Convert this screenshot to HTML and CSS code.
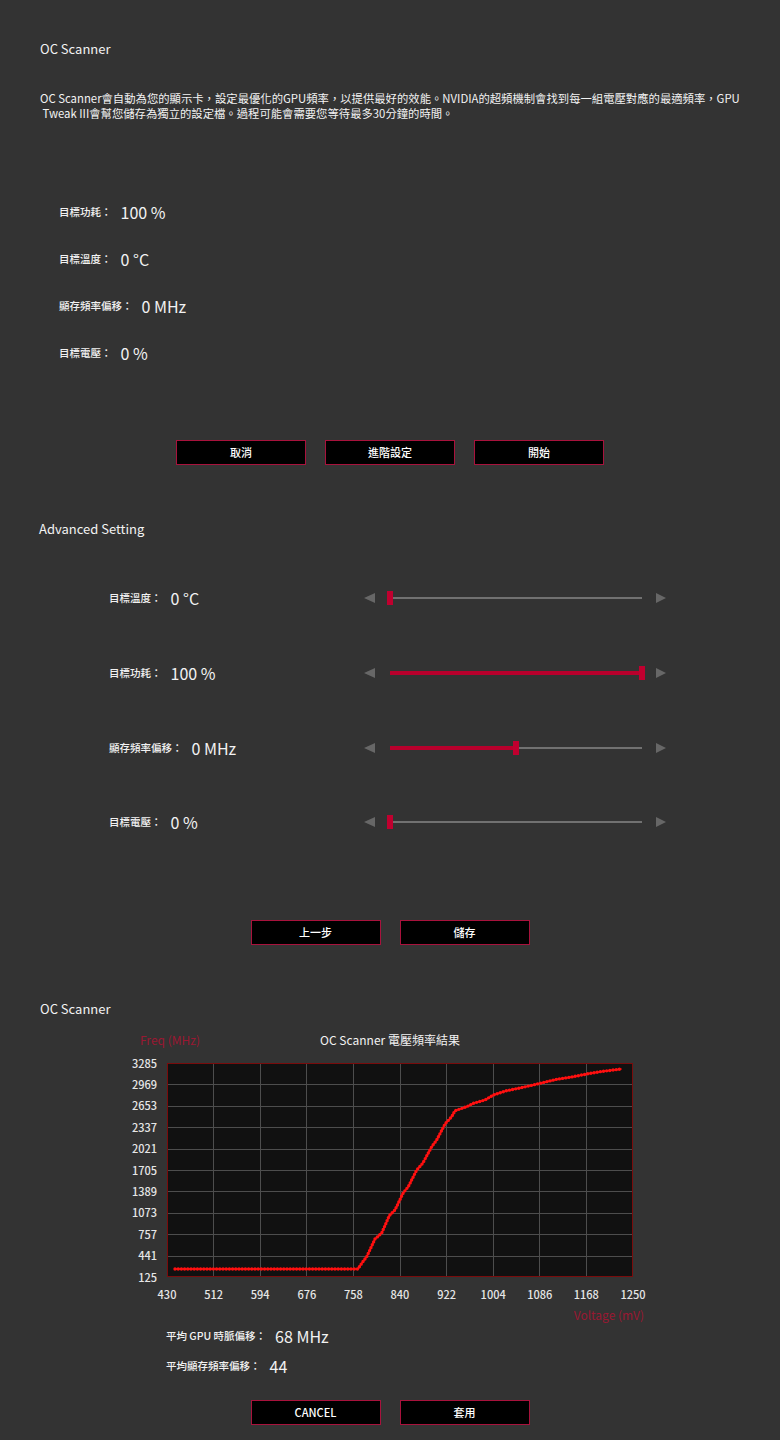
FILE: index.html
```html
<!DOCTYPE html>
<html lang="zh-Hant">
<head>
<meta charset="utf-8">
<title>OC Scanner</title>
<link rel="stylesheet" href="styles.css">
</head>
<body>
<main class="page">
  <section class="block">
    <h1 class="title">OC Scanner</h1>
    <p class="desc">OC Scanner會自動為您的顯示卡，設定最優化的GPU頻率，以提供最好的效能。NVIDIA的超頻機制會找到每一組電壓對應的最適頻率，GPU<br>&nbsp;Tweak III會幫您儲存為獨立的設定檔。過程可能會需要您等待最多30分鐘的時間。</p>
    <ul class="stats">
      <li class="stat"><span class="label">目標功耗：</span><span class="value">100 %</span></li>
      <li class="stat"><span class="label">目標溫度：</span><span class="value">0 °C</span></li>
      <li class="stat"><span class="label">顯存頻率偏移：</span><span class="value">0 MHz</span></li>
      <li class="stat"><span class="label">目標電壓：</span><span class="value">0 %</span></li>
    </ul>
    <div class="actions actions-first">
      <button class="btn">取消</button>
      <button class="btn">進階設定</button>
      <button class="btn">開始</button>
    </div>
  </section>

  <section class="block">
    <h2 class="title title-adv">Advanced Setting</h2>
    <ul class="sliders">
      <li class="slider-row">
        <div class="field"><span class="label">目標溫度：</span><span class="value">0 °C</span></div>
        <div class="slider">
          <span class="arrow arrow-left"></span>
          <div class="track"><div class="fill" style="width:0px"></div><div class="thumb" style="left:0px"></div></div>
          <span class="arrow arrow-right"></span>
        </div>
      </li>
      <li class="slider-row">
        <div class="field"><span class="label">目標功耗：</span><span class="value">100 %</span></div>
        <div class="slider">
          <span class="arrow arrow-left"></span>
          <div class="track"><div class="fill" style="width:252px"></div><div class="thumb" style="left:252px"></div></div>
          <span class="arrow arrow-right"></span>
        </div>
      </li>
      <li class="slider-row">
        <div class="field"><span class="label">顯存頻率偏移：</span><span class="value">0 MHz</span></div>
        <div class="slider">
          <span class="arrow arrow-left"></span>
          <div class="track"><div class="fill" style="width:126px"></div><div class="thumb" style="left:126px"></div></div>
          <span class="arrow arrow-right"></span>
        </div>
      </li>
      <li class="slider-row">
        <div class="field"><span class="label">目標電壓：</span><span class="value">0 %</span></div>
        <div class="slider">
          <span class="arrow arrow-left"></span>
          <div class="track"><div class="fill" style="width:0px"></div><div class="thumb" style="left:0px"></div></div>
          <span class="arrow arrow-right"></span>
        </div>
      </li>
    </ul>
    <div class="actions actions-adv">
      <button class="btn">上一步</button>
      <button class="btn">儲存</button>
    </div>
  </section>

  <section class="block">
    <h2 class="title title-result">OC Scanner</h2>
    <div class="chart">
      <div class="chart-head">
        <span class="axis-name">Freq (MHz)</span>
        <span class="chart-title">OC Scanner 電壓頻率結果</span>
        <span></span>
      </div>
      <div class="chart-body">
        <div class="ylabels">
          <span>3285</span><span>2969</span><span>2653</span><span>2337</span><span>2021</span><span>1705</span><span>1389</span><span>1073</span><span>757</span><span>441</span><span>125</span>
        </div>
        <div class="plot">
          <svg class="plot-svg" viewBox="1 1 464 212" width="464" height="212" xmlns="http://www.w3.org/2000/svg">
            <g stroke="#4d4d4d" stroke-width="1" shape-rendering="crispEdges">
              <line x1="0" y1="21.5" x2="466" y2="21.5"/>
              <line x1="0" y1="43.5" x2="466" y2="43.5"/>
              <line x1="0" y1="64.5" x2="466" y2="64.5"/>
              <line x1="0" y1="86.5" x2="466" y2="86.5"/>
              <line x1="0" y1="107.5" x2="466" y2="107.5"/>
              <line x1="0" y1="128.5" x2="466" y2="128.5"/>
              <line x1="0" y1="150.5" x2="466" y2="150.5"/>
              <line x1="0" y1="171.5" x2="466" y2="171.5"/>
              <line x1="0" y1="193.5" x2="466" y2="193.5"/>
              <line x1="46.5" y1="0" x2="46.5" y2="214"/>
              <line x1="93.5" y1="0" x2="93.5" y2="214"/>
              <line x1="139.5" y1="0" x2="139.5" y2="214"/>
              <line x1="186.5" y1="0" x2="186.5" y2="214"/>
              <line x1="233.5" y1="0" x2="233.5" y2="214"/>
              <line x1="279.5" y1="0" x2="279.5" y2="214"/>
              <line x1="326.5" y1="0" x2="326.5" y2="214"/>
              <line x1="372.5" y1="0" x2="372.5" y2="214"/>
              <line x1="419.5" y1="0" x2="419.5" y2="214"/>
            </g>
            <polyline class="curve" points="8,206 191,206 194.7,200.3 199.7,193.7 208,176 214.7,170 222.3,152.7 228,147 236.3,129.7 241.3,123.7 249.7,107 255.7,100.3 264.7,83.7 269.7,77 278,61 284.7,53.7 288,47.7 299.7,43.7 306.3,40.3 318,37 326.3,32 339.7,27.7 356.3,24.3 373,20.3 389.7,16.3 406.3,13.7 419.7,11 433,8.7 446.3,7 454.7,6"/>
            <polyline class="dots" points="8,206 191,206 194.7,200.3 199.7,193.7 208,176 214.7,170 222.3,152.7 228,147 236.3,129.7 241.3,123.7 249.7,107 255.7,100.3 264.7,83.7 269.7,77 278,61 284.7,53.7 288,47.7 299.7,43.7 306.3,40.3 318,37 326.3,32 339.7,27.7 356.3,24.3 373,20.3 389.7,16.3 406.3,13.7 419.7,11 433,8.7 446.3,7 454.7,6"/>
          </svg>
        </div>
      </div>
      <div class="xlabels">
        <span>430</span><span>512</span><span>594</span><span>676</span><span>758</span><span>840</span><span>922</span><span>1004</span><span>1086</span><span>1168</span><span>1250</span>
      </div>
      <div class="axis-name axis-x">Voltage (mV)</div>
    </div>
    <div class="summary">
      <p class="sum-row"><span class="label">平均 GPU 時脈偏移：</span><span class="value">68 MHz</span></p>
      <p class="sum-row sum-row-2"><span class="label">平均顯存頻率偏移：</span><span class="value">44</span></p>
    </div>
    <div class="actions actions-result">
      <button class="btn">CANCEL</button>
      <button class="btn">套用</button>
    </div>
  </section>
</main>
</body>
</html>
```

FILE: styles.css
```css
* { box-sizing: border-box; }

html, body {
  margin: 0;
  padding: 0;
  background: #333333;
}

body {
  width: 780px;
  color: #f2f2f2;
  font-family: "Noto Sans CJK TC", "Noto Sans", sans-serif;
}

.page {
  padding: 40px 0 0 0;
}

.title {
  margin: 0 0 0 40px;
  font-size: 13px;
  line-height: 18px;
  font-weight: normal;
}

.title-adv {
  margin-top: 55px;
  margin-left: 39px;
}

.title-result {
  margin-top: 55px;
}

.desc {
  margin: 33px 40px 0 40px;
  font-size: 11.35px;
  line-height: 15px;
  white-space: nowrap;
}

.stats {
  list-style: none;
  margin: 67px 0 0 59px;
  padding: 0;
}

.stat {
  height: 47px;
  display: flex;
  align-items: center;
}

.label {
  font-size: 10.5px;
  line-height: 16px;
  font-weight: 500;
}

.value {
  margin-left: 9px;
  font-size: 16px;
  line-height: 18px;
}

.actions {
  display: flex;
  justify-content: center;
  gap: 19px;
}

.actions-first { margin-top: 64px; }
.actions-adv { margin-top: 60px; }
.actions-result { margin-top: 26px; }

.btn {
  width: 130px;
  height: 25px;
  margin: 0;
  padding: 0;
  background: #000;
  border: 1px solid #a8123c;
  color: #fff;
  font-family: "Noto Sans CJK TC", "Noto Sans", sans-serif;
  font-size: 11px;
  font-weight: 500;
  line-height: 23px;
}

/* Sliders */
.sliders {
  list-style: none;
  margin: 23px 0 0 109px;
  padding: 0;
}

.slider-row {
  height: 74.67px;
  display: flex;
  align-items: center;
}

.field {
  flex: 0 0 255px;
  display: flex;
  align-items: center;
}

.slider {
  display: flex;
  align-items: center;
}

.arrow {
  display: block;
  width: 0;
  height: 0;
  border-top: 5.5px solid transparent;
  border-bottom: 5.5px solid transparent;
}

.arrow-left {
  border-right: 11px solid #676767;
}

.arrow-right {
  margin-left: 11px;
  border-left: 10px solid #676767;
}

.track {
  position: relative;
  margin-left: 12px;
  width: 258px;
  height: 14px;
}

.track::before {
  content: "";
  position: absolute;
  left: 3px;
  right: 3px;
  top: 6px;
  height: 2px;
  background: #717171;
}

.fill {
  position: absolute;
  left: 3px;
  top: 5px;
  height: 4px;
  background: #b8002c;
}

.thumb {
  position: absolute;
  top: 0;
  width: 6px;
  height: 14px;
  background: #c0002f;
}

/* Chart */
.chart {
  margin: 14px 0 0 140px;
  width: 500px;
}

.chart-head {
  display: grid;
  grid-template-columns: 1fr auto 1fr;
  align-items: center;
  height: 16px;
}

.axis-name {
  color: #9a1832;
  font-size: 12px;
  line-height: 16px;
}

.chart-title {
  font-size: 12px;
  line-height: 16px;
  color: #f2f2f2;
}

.chart-body {
  margin-top: 15px;
  display: flex;
  align-items: flex-start;
}

.ylabels {
  width: 27px;
  padding-right: 10px;
  height: 226px;
  margin: -6px 0 -6px 0;
  display: flex;
  flex-direction: column;
  justify-content: space-between;
  align-items: flex-end;
  font-size: 11px;
  font-weight: 500;
  line-height: 12px;
  color: #e6e6e6;
}

.plot {
  width: 466px;
  height: 214px;
  border: 1px solid #7a0c0c;
  background: #111111;
}

.plot-svg {
  display: block;
}

.curve {
  fill: none;
  stroke: #f00000;
  stroke-width: 1.6;
  stroke-linejoin: round;
}

.dots {
  fill: none;
  stroke: #ff1010;
  stroke-width: 3.4;
  stroke-linecap: round;
  stroke-dasharray: 0 3.2;
}

.xlabels {
  margin: 10px 0 0 7px;
  width: 506px;
  display: flex;
  justify-content: space-between;
  font-size: 11px;
  font-weight: 500;
  line-height: 14px;
  color: #e6e6e6;
}

.xlabels span {
  width: 40px;
  text-align: center;
}

.axis-x {
  margin-top: 7px;
  width: 504px;
  text-align: right;
  line-height: 14px;
}

.summary {
  margin: 6px 0 0 166px;
}

.sum-row {
  margin: 0;
  height: 16px;
  display: flex;
  align-items: center;
}

.sum-row-2 {
  margin-top: 14px;
}
```
